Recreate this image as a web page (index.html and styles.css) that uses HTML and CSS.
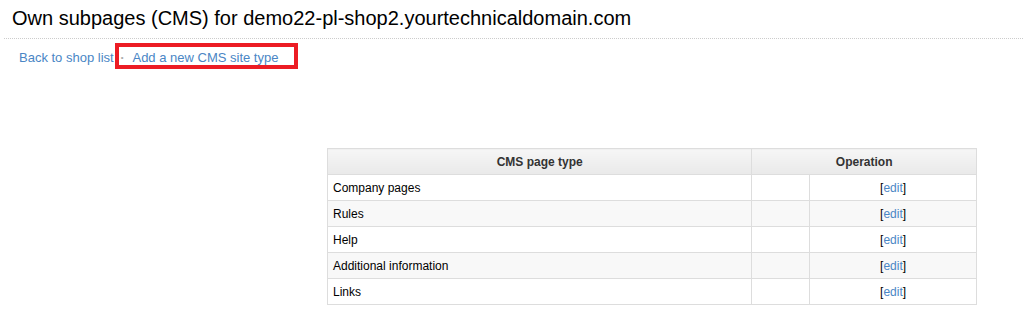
FILE: index.html
```html
<!DOCTYPE html>
<html>
<head>
<meta charset="utf-8">
<link rel="stylesheet" href="styles.css">
</head>
<body>
<div class="page">
  <div class="header">
    <h1 class="title">Own subpages (CMS) for demo22-pl-shop2.yourtechnicaldomain.com</h1>
  </div>
  <div class="actions">
    <a class="link back" href="#">Back to shop list</a>
    <span class="highlight"><span class="sep">•</span><a class="link" href="#">Add a new CMS site type</a></span>
  </div>
  <div class="content">
    <table class="grid">
      <colgroup>
        <col class="c1"><col class="c2"><col class="c3">
      </colgroup>
      <thead>
        <tr><th>CMS page type</th><th colspan="2">Operation</th></tr>
      </thead>
      <tbody>
        <tr><td>Company pages</td><td></td><td class="op">[<a href="#">edit</a>]</td></tr>
        <tr><td>Rules</td><td></td><td class="op">[<a href="#">edit</a>]</td></tr>
        <tr><td>Help</td><td></td><td class="op">[<a href="#">edit</a>]</td></tr>
        <tr><td>Additional information</td><td></td><td class="op">[<a href="#">edit</a>]</td></tr>
        <tr><td>Links</td><td></td><td class="op">[<a href="#">edit</a>]</td></tr>
      </tbody>
    </table>
  </div>
</div>
</body>
</html>
```

FILE: styles.css
```css
html, body {
  margin: 0;
  padding: 0;
  background: #fff;
}
body {
  font-family: "Liberation Sans", Arial, sans-serif;
  color: #000;
}
.page {
  padding: 0 2px 0 4px;
}
.header {
  border-bottom: 1px dotted #cccccc;
  padding: 7px 0 8px 8px;
}
.title {
  margin: 0;
  font-size: 20px;
  font-weight: normal;
  line-height: 23px;
  color: #000;
}
.actions {
  display: flex;
  align-items: center;
  height: 26px;
  margin-top: 4px;
  padding-left: 15px;
  font-size: 13px;
}
.link {
  color: #4a86c5;
  text-decoration: none;
}
.back {
  padding-top: 3px;
}
.sep {
  color: #aaa;
  font-size: 8px;
  margin: 0 9px 0 0;
}
.highlight {
  display: inline-flex;
  align-items: center;
  height: 15px;
  padding: 3px 16px 0 2px;
  border: 4px solid #ec1c24;
  margin-left: 1px;
}
.content {
  padding-left: 323px;
  margin-top: 79px;
}
.grid {
  border-collapse: collapse;
  width: 650px;
  font-size: 12px;
}
.c1 { width: 425px; }
.c2 { width: 58px; }
.c3 { width: 167px; }
.grid th, .grid td {
  border: 1px solid #dddddd;
  height: 26px;
  padding: 0 5px;
  box-sizing: border-box;
}
.grid th {
  font-weight: bold;
  color: #333;
  background: linear-gradient(#f6f6f6, #e9e9e9);
  text-align: center;
}
.grid tbody tr:nth-child(even) td {
  background: #f8f8f8;
}
.op {
  text-align: center;
}
.op a {
  color: #4a86c5;
  text-decoration: none;
}
```
